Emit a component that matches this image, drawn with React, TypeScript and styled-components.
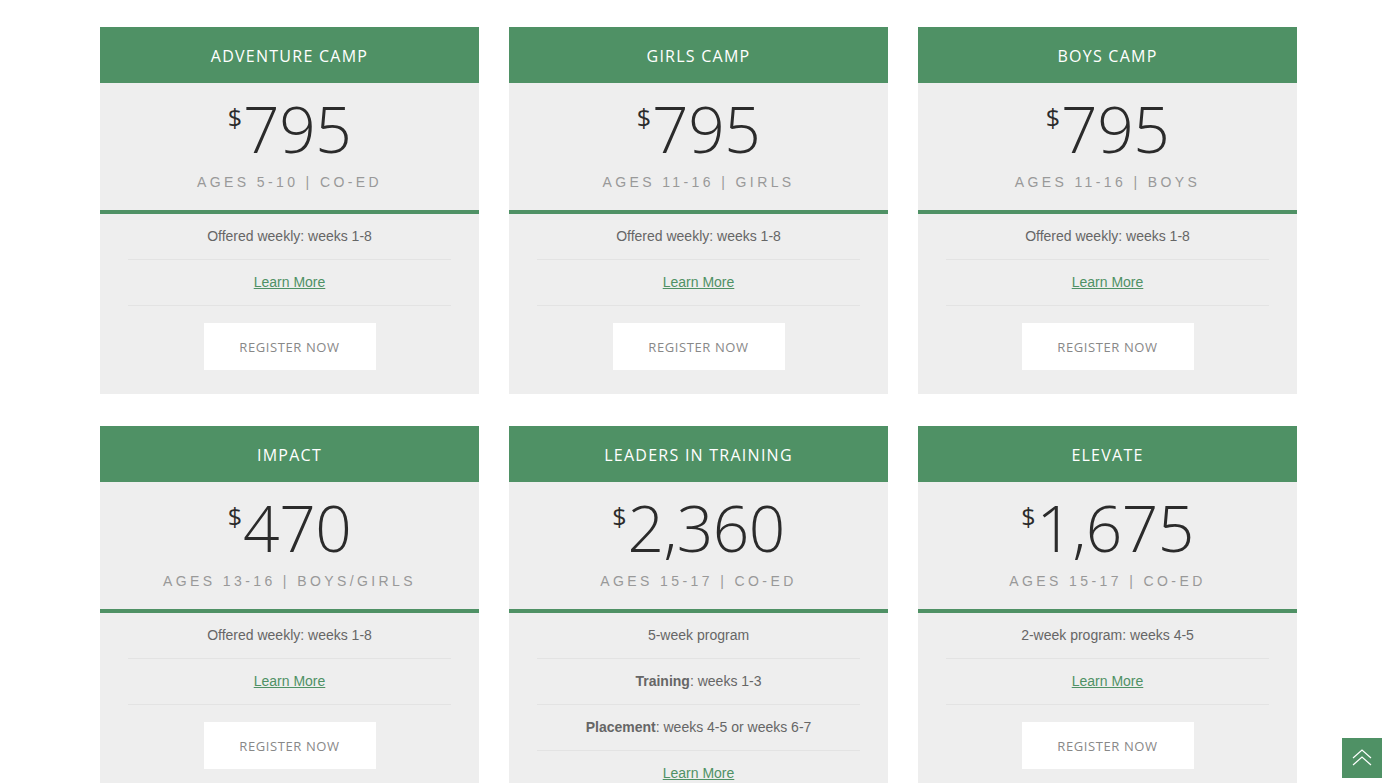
import React from "react";
import styled, { createGlobalStyle } from "styled-components";

const Global = createGlobalStyle`
  html, body { margin: 0; padding: 0; background: #ffffff; }
  body { font-family: "Liberation Sans", Arial, sans-serif; }
  * { box-sizing: border-box; }
`;

const Page = styled.div`
  padding: 27px 100px 0 100px;
  height: 783px;
  overflow: hidden;
`;

const Grid = styled.div`
  display: grid;
  grid-template-columns: 379px 379px 379px;
  column-gap: 30px;
  row-gap: 32px;
  align-items: stretch;
`;

const Card = styled.div`
  background: #eeeeee;
  display: flex;
  flex-direction: column;
  padding-bottom: 24px;
`;

const Header = styled.div`
  background: #4f9165;
  color: #ffffff;
  height: 56px;
  display: flex;
  align-items: center;
  justify-content: center;
  font-family: "Open Sans", sans-serif;
  font-size: 16px;
  font-weight: 400;
  letter-spacing: 1.25px;
  text-transform: uppercase;
  padding-top: 1px;
`;

const PriceBox = styled.div`
  height: 131px;
  border-bottom: 4px solid #4f9165;
  display: flex;
  flex-direction: column;
  align-items: center;
  padding-top: 14px;
`;

const Price = styled.div`
  display: flex;
  align-items: flex-start;
  color: #2b2b2b;
  font-family: "Open Sans", sans-serif;
  font-weight: 300;
  line-height: 1;
`;

const Currency = styled.span`
  font-size: 25px;
  font-weight: 400;
  margin-top: 8px;
  margin-right: 1px;
`;

const Amount = styled.span`
  font-size: 64px;
  letter-spacing: -0.5px;
`;

const Ages = styled.div`
  margin-top: 13px;
  font-size: 14px;
  letter-spacing: 3.4px;
  color: #999999;
  text-transform: uppercase;
`;

const List = styled.ul`
  list-style: none;
  margin: 0 28px;
  padding: 0;
`;

const Item = styled.li`
  padding: 12px 0 13px;
  line-height: 20px;
  font-size: 14px;
  color: #666666;
  text-align: center;
  border-bottom: 1px solid #e3e3e3;
  b { font-weight: 700; color: #666666; }
`;

const Link = styled.a`
  color: #4f9165;
  text-decoration: underline;
  font-size: 14px;
`;

const Register = styled.button`
  align-self: center;
  margin-top: 17px;
  width: 172px;
  height: 47px;
  background: #ffffff;
  border: none;
  color: #888888;
  font-family: "Open Sans", sans-serif;
  font-size: 13px;
  font-weight: 400;
  text-transform: uppercase;
  letter-spacing: 0.6px;
`;

const ToTop = styled.button`
  position: fixed;
  right: 18px;
  bottom: 5px;
  width: 40px;
  height: 40px;
  background: #4f9165;
  border: none;
  display: flex;
  align-items: center;
  justify-content: center;
  padding: 0;
`;

type Camp = {
  name: string;
  price: string;
  ages: string;
  items: React.ReactNode[];
};

const camps: Camp[] = [
  { name: "Adventure Camp", price: "795", ages: "Ages 5-10 | Co-ed", items: ["Offered weekly: weeks 1-8"] },
  { name: "Girls Camp", price: "795", ages: "Ages 11-16 | Girls", items: ["Offered weekly: weeks 1-8"] },
  { name: "Boys Camp", price: "795", ages: "Ages 11-16 | Boys", items: ["Offered weekly: weeks 1-8"] },
  { name: "Impact", price: "470", ages: "Ages 13-16 | Boys/Girls", items: ["Offered weekly: weeks 1-8"] },
  {
    name: "Leaders in Training",
    price: "2,360",
    ages: "Ages 15-17 | Co-ed",
    items: [
      "5-week program",
      <><b>Training</b>: weeks 1-3</>,
      <><b>Placement</b>: weeks 4-5 or weeks 6-7</>,
    ],
  },
  { name: "Elevate", price: "1,675", ages: "Ages 15-17 | Co-ed", items: ["2-week program: weeks 4-5"] },
];

export default function App() {
  return (
    <>
      <Global />
      <Page>
        <Grid>
          {camps.map((c) => (
            <Card key={c.name}>
              <Header>{c.name}</Header>
              <PriceBox>
                <Price>
                  <Currency>$</Currency>
                  <Amount>{c.price}</Amount>
                </Price>
                <Ages>{c.ages}</Ages>
              </PriceBox>
              <List>
                {c.items.map((it, i) => (
                  <Item key={i}>{it}</Item>
                ))}
                <Item>
                  <Link href="#">Learn More</Link>
                </Item>
              </List>
              <Register>Register Now</Register>
            </Card>
          ))}
        </Grid>
      </Page>
      <ToTop aria-label="Back to top">
        <svg width="22" height="18" viewBox="0 0 22 18" fill="none" stroke="#ffffff" strokeWidth="1.2">
          <polyline points="2,9 11,1 20,9" />
          <polyline points="2,16 11,8 20,16" />
        </svg>
      </ToTop>
    </>
  );
}
